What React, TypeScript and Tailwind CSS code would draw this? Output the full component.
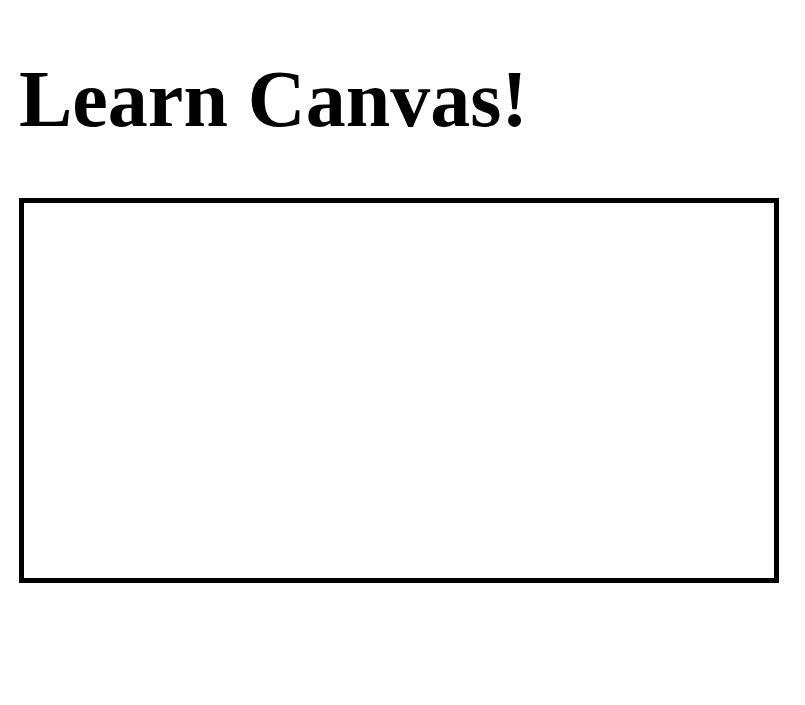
export default function App() {
  return (
    <div className="h-[705px] overflow-hidden bg-white px-[19px] pt-[53.6px] font-['Liberation_Serif',_'Times_New_Roman',_serif] text-black">
      <h1 className="mb-[53.6px] text-[80px] leading-[normal] font-bold">Learn Canvas!</h1>
      <div className="h-[385px] w-[760px] border-[5px] border-black bg-white" />
    </div>
  )
}
